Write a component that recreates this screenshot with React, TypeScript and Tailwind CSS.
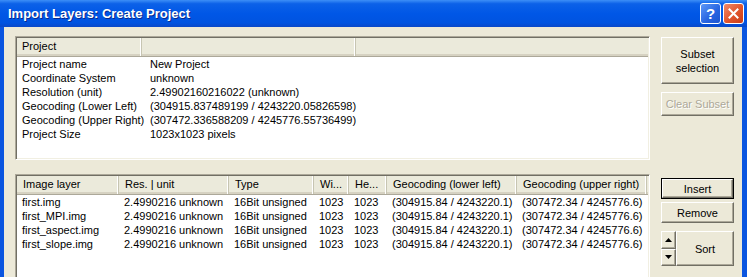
import React from 'react';

const projectRows = [
  ['Project name', 'New Project'],
  ['Coordinate System', 'unknown'],
  ['Resolution (unit)', '2.49902160216022 (unknown)'],
  ['Geocoding (Lower Left)', '(304915.837489199 / 4243220.05826598)'],
  ['Geocoding (Upper Right)', '(307472.336588209 / 4245776.55736499)'],
  ['Project Size', '1023x1023 pixels'],
];

// column classes are written out in full so tailwind picks them up
const layerCols = [
  { label: 'Image layer', w: 'w-[102px]' },
  { label: 'Res. | unit', w: 'w-[110px]' },
  { label: 'Type', w: 'w-[85px]' },
  { label: 'Wi...', w: 'w-[35px]' },
  { label: 'He...', w: 'w-[38px]' },
  { label: 'Geocoding (lower left)', w: 'w-[130px]' },
  { label: 'Geocoding (upper right)', w: 'w-[130px]' },
];

const layers = ['first.img', 'first_MPI.img', 'first_aspect.img', 'first_slope.img'].map((name) => [
  name,
  '2.4990216 unknown',
  '16Bit unsigned',
  '1023',
  '1023',
  '(304915.84 / 4243220.1)',
  '(307472.34 / 4245776.6)',
]);

const sunken =
  'border border-t-[#aca899] border-l-[#aca899] border-r-white border-b-white shadow-[inset_1px_1px_0_#716f64,inset_-1px_-1px_0_#f1efe2] p-px bg-white';

const raised =
  'border border-t-white border-l-white border-r-[#716f64] border-b-[#716f64] shadow-[inset_-1px_-1px_0_#aca899] bg-[#ece9d8]';

const headerCell =
  'h-[18px] leading-[17px] pl-[5px] border-r border-r-[#c7c5b2] shadow-[inset_-1px_0_0_#ffffff] whitespace-nowrap overflow-hidden';

function Btn({
  children,
  className = '',
  disabled = false,
  isDefault = false,
}: {
  children: React.ReactNode;
  className?: string;
  disabled?: boolean;
  isDefault?: boolean;
}) {
  const inner = (
    <div
      className={`${raised} flex-1 flex items-center justify-center text-center leading-[14px] ${
        disabled ? 'text-[#aca899] [text-shadow:1px_1px_0_#ffffff]' : 'text-black'
      }`}
    >
      {children}
    </div>
  );
  if (isDefault) {
    return <div className={`flex border border-black ${className}`}>{inner}</div>;
  }
  return <div className={`flex ${className}`}>{inner}</div>;
}

function Arrow({ up }: { up?: boolean }) {
  return (
    <svg width="7" height="4" viewBox="0 0 7 4">
      <path d={up ? 'M0 4 L3.5 0 L7 4 Z' : 'M0 0 L3.5 4 L7 0 Z'} fill="#000" />
    </svg>
  );
}

export default function App() {
  return (
    <div
      className="w-[747px] h-[277px] overflow-hidden flex flex-col text-[11px] text-black"
      style={{ fontFamily: '"Liberation Sans", Arial, sans-serif' }}
    >
      {/* title bar */}
      <div className="h-[27px] shrink-0 flex items-center pl-[8px] pr-[3px] bg-[linear-gradient(to_bottom,#3d8ff7_0%,#0c61e8_14%,#0057e6_50%,#0053e0_85%,#0a48c8_100%)]">
        <div className="flex-1 text-white font-bold text-[13px] [text-shadow:1px_1px_0_#0a2a8c]">
          Import Layers: Create Project
        </div>
        <div className="w-[21px] h-[21px] mr-[2px] rounded-[3px] border border-white bg-[linear-gradient(135deg,#5d98f7,#2663e0_60%,#1d55cf)] flex items-center justify-center text-white font-bold text-[15px] leading-none">
          ?
        </div>
        <div className="w-[21px] h-[21px] rounded-[3px] border border-white bg-[linear-gradient(135deg,#f08a6a,#e0542c_55%,#c83c17)] flex items-center justify-center">
          <svg width="11" height="11" viewBox="0 0 11 11">
            <path d="M1.5 1.5 L9.5 9.5 M9.5 1.5 L1.5 9.5" stroke="#fff" strokeWidth="2" strokeLinecap="square" />
          </svg>
        </div>
      </div>

      {/* body */}
      <div className="flex-1 flex bg-[#ece9d8] border-l-4 border-r-[5px] border-l-[#0a55e0] border-r-[#0a55e0] pl-[11px] pt-[9px]">
        <div className="w-[635px] flex flex-col">
          {/* project panel */}
          <div className={`${sunken} h-[124px] flex flex-col`}>
            <div className="flex bg-[#ebeadb] border-b border-b-[#aca899] shadow-[inset_0_-2px_0_#d6d2c2]">
              <div className={`${headerCell} w-[125px]`}>Project</div>
              <div className={`${headerCell} w-[214px]`}></div>
              <div className="flex-1 h-[18px]"></div>
            </div>
            {projectRows.map(([k, v]) => (
              <div key={k} className="flex h-[14px] leading-[14px] whitespace-nowrap">
                <div className="w-[128px] pl-[5px]">{k}</div>
                <div className="pl-[5px]">{v}</div>
              </div>
            ))}
          </div>

          {/* layers panel */}
          <div className={`${sunken} mt-[14px] h-[120px] flex flex-col`}>
            <div className="flex bg-[#ebeadb] border-b border-b-[#aca899] shadow-[inset_0_-2px_0_#d6d2c2]">
              {layerCols.map((c) => (
                <div key={c.label} className={`${headerCell} ${c.w} pl-[6px]`}>
                  {c.label}
                </div>
              ))}
              <div className="flex-1 h-[18px]"></div>
            </div>
            {layers.map((row) => (
              <div key={row[0]} className="flex h-[14px] leading-[14px] whitespace-nowrap">
                {row.map((cell, i) => (
                  <div key={i} className={`${layerCols[i].w} pl-[5px] overflow-hidden`}>
                    {cell}
                  </div>
                ))}
              </div>
            ))}
          </div>
        </div>

        {/* buttons */}
        <div className="w-[73px] ml-[11px] flex flex-col">
          <Btn className="mt-[1px] h-[47px]">
            Subset
            <br />
            selection
          </Btn>
          <Btn className="mt-[8px] h-[24px]" disabled>
            Clear Subset
          </Btn>
          <Btn className="mt-[62px] h-[21px]" isDefault>
            Insert
          </Btn>
          <Btn className="mt-[3px] h-[21px]">Remove</Btn>
          <div className="mt-[8px] h-[35px] flex">
            <div className="w-[15px] flex flex-col">
              <div className={`${raised} flex-1 flex items-center justify-center`}>
                <Arrow up />
              </div>
              <div className={`${raised} flex-1 flex items-center justify-center`}>
                <Arrow />
              </div>
            </div>
            <Btn className="flex-1">Sort</Btn>
          </div>
        </div>
      </div>
    </div>
  );
}
